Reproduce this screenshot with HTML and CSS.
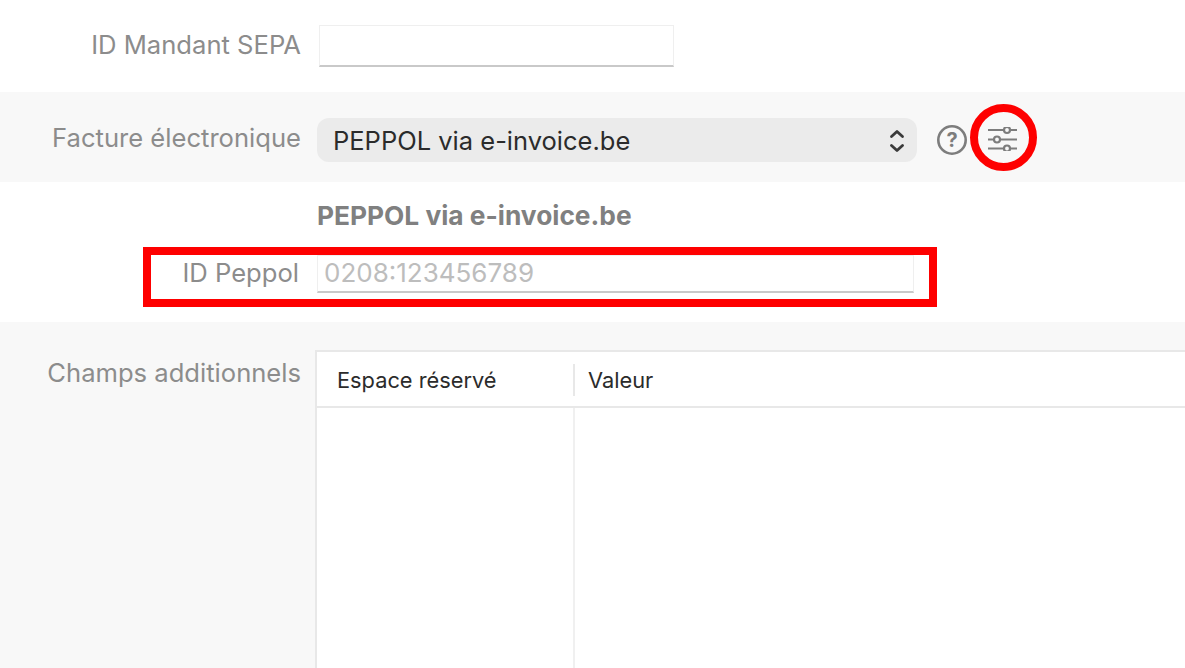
FILE: index.html
```html
<!DOCTYPE html>
<html lang="fr">
  <head>
    <meta charset="UTF-8" />
    <title>Facture électronique</title>
    <link rel="stylesheet" href="styles.css">
  </head>
  <body>
    <div class="row row-sepa">
      <label class="field-label">ID Mandant SEPA</label>
      <div class="text-input sepa-input"></div>
    </div>

    <div class="row row-gray row-invoice">
      <label class="field-label">Facture électronique</label>
      <div class="select">
        <span>PEPPOL via e-invoice.be</span>
        <svg class="chevrons" width="16" height="24" viewBox="0 0 16 24" fill="none" stroke="#3a3a3a" stroke-width="2.800" stroke-linecap="round" stroke-linejoin="round">
          <path d="M2.500 8.500 8 3.500l5.500 5" />
          <path d="M2.500 17.500 8 22.500l5.500-5" />
        </svg>
      </div>
      <svg class="help" width="30" height="30" viewBox="0 0 30 30">
        <circle cx="15" cy="15" r="13.700" fill="none" stroke="#7d7d7d" stroke-width="2.600" />
        <text x="15" y="22" text-anchor="middle" class="help-mark">?</text>
      </svg>
      <svg class="sliders" width="29" height="24" viewBox="0 0 29 24" fill="none" stroke="#7d7d7d" stroke-width="2.200">
        <path d="M0 3h16M22 3h7M0 12.500h6M12 12.500h17M0 21.500h16M22 21.500h7" />
        <circle cx="19" cy="3" r="3" />
        <circle cx="9" cy="12.500" r="3" />
        <circle cx="19" cy="21.500" r="3" />
      </svg>
      <div class="mark-circle"></div>
    </div>

    <div class="section-peppol">
      <div class="peppol-title">PEPPOL via e-invoice.be</div>
      <div class="row-peppol">
        <label class="field-label">ID Peppol</label>
        <div class="text-input peppol-input">0208:123456789</div>
        <div class="mark-rect"></div>
      </div>
    </div>

    <div class="row-gray section-fields">
      <label class="field-label">Champs additionnels</label>
      <div class="table">
        <div class="table-head">
          <div class="col-a">Espace réservé</div>
          <div class="col-b">Valeur</div>
        </div>
        <div class="table-body">
          <div class="col-a"></div>
          <div class="col-b"></div>
        </div>
      </div>
    </div>
  </body>
</html>
```

FILE: styles.css
```css
html,
body {
  margin: 0;
  padding: 0;
  height: 668px;
  overflow: hidden;
}
body {
  font-family: Inter, 'Noto Sans', sans-serif;
  background-color: #fff;
  display: flex;
  flex-direction: column;
}
.row {
  display: flex;
  flex: none;
  align-items: center;
}
.row-gray {
  background-color: #f8f8f8;
}
.field-label {
  flex: none;
  width: 301px;
  text-align: right;
  font-size: 25.600px;
  color: #8c8c8c;
}
.text-input {
  box-sizing: border-box;
  background-color: #fff;
  border: 1px solid #efefef;
  border-bottom: 2px solid #c9c9c9;
}
.row-sepa {
  height: 92px;
}
.row-sepa .field-label {
  margin-bottom: 3px;
}
.sepa-input {
  width: 355px;
  height: 42px;
  margin-left: 18px;
}
.row-invoice {
  box-sizing: border-box;
  height: 90px;
  padding-top: 6px;
  position: relative;
}
.row-invoice .field-label {
  margin-top: -6px;
}
.select {
  box-sizing: border-box;
  width: 600px;
  height: 44px;
  margin-left: 16px;
  padding: 0 12px 0 16px;
  display: flex;
  align-items: center;
  justify-content: space-between;
  background-color: #ebebeb;
  border-radius: 12px;
  font-size: 25.500px;
  color: #2b2b2b;
}
.help {
  margin-left: 20px;
}
.help-mark {
  font-family: Inter, sans-serif;
  font-size: 20px;
  font-weight: 700;
  fill: #7d7d7d;
}
.sliders {
  margin-left: 21px;
  margin-top: -2px;
}
.mark-circle {
  position: absolute;
  left: 970px;
  top: 12px;
  width: 67px;
  height: 67px;
  box-sizing: border-box;
  border: 8px solid #fe0000;
  border-radius: 50%;
}
.section-peppol {
  height: 140px;
  flex: none;
  box-sizing: border-box;
  padding-top: 19px;
}
.peppol-title {
  margin-left: 317px;
  font-size: 26.300px;
  line-height: 30px;
  font-weight: 700;
  color: #808080;
}
.row-peppol {
  position: relative;
  display: flex;
  align-items: center;
  margin-top: 24px;
  height: 38px;
}
.row-peppol .field-label {
  width: 299px;
  margin-bottom: 3px;
}
.peppol-input {
  width: 597px;
  height: 38px;
  margin-left: 18px;
  padding-left: 6px;
  font-size: 26px;
  line-height: 34px;
  color: #bdbdbd;
}
.mark-rect {
  position: absolute;
  left: 143px;
  top: -8px;
  width: 794px;
  height: 60px;
  box-sizing: border-box;
  border: 8px solid #fe0000;
}
.section-fields {
  flex: 1;
  min-height: 0;
  display: flex;
  align-items: stretch;
  padding-top: 28px;
}
.section-fields .field-label {
  margin-top: 7px;
}
.table {
  flex: 1;
  display: flex;
  flex-direction: column;
  margin-left: 14px;
  background-color: #fff;
  border-top: 2px solid #e8e8e8;
  border-left: 2px solid #e8e8e8;
}
.table-head {
  display: flex;
  flex: none;
  align-items: center;
  box-sizing: border-box;
  height: 56px;
  padding-top: 1px;
  border-bottom: 2px solid #e8e8e8;
  font-size: 21.800px;
  color: #2b2b2b;
}
.table-head .col-a {
  box-sizing: border-box;
  width: 258px;
  padding-left: 20px;
  height: 32px;
  line-height: 32px;
  border-right: 2px solid #e8e8e8;
}
.table-head .col-b {
  padding-left: 13px;
}
.table-body {
  display: flex;
  flex: 1;
}
.table-body .col-a {
  box-sizing: border-box;
  width: 258px;
  border-right: 2px solid #f0f0f0;
}
```
